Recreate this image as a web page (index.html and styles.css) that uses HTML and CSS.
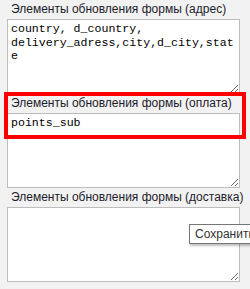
FILE: index.html
```html
<!DOCTYPE html>
<html>
<head>
<meta charset="utf-8">
<link rel="stylesheet" href="styles.css">
</head>
<body>
<div class="form">
  <div class="field">
    <label class="label">Элементы обновления формы (адрес)</label>
    <textarea class="area">country, d_country, delivery_adress,city,d_city,state</textarea>
  </div>
  <div class="field">
    <label class="label">Элементы обновления формы (оплата)</label>
    <textarea class="area">points_sub</textarea>
  </div>
  <div class="field">
    <label class="label">Элементы обновления формы (доставка)</label>
    <textarea class="area"></textarea>
  </div>
</div>
<div class="highlight"></div>
<div class="tooltip">Сохранить</div>
</body>
</html>
```

FILE: styles.css
```css
html, body {
  margin: 0;
  padding: 0;
  background: #f2f2f2;
  width: 250px;
  height: 289px;
  overflow: hidden;
}
body {
  position: relative;
  font-family: "Liberation Sans", Arial, sans-serif;
}
.form {
  padding-left: 7px;
  display: flex;
  flex-direction: column;
}
.field {
  display: flex;
  flex-direction: column;
}
.label {
  display: block;
  height: 19px;
  line-height: 18px;
  font-size: 12px;
  padding-left: 4px;
  color: #1c1c2c;
  white-space: nowrap;
}
.area {
  display: block;
  box-sizing: border-box;
  width: 233px;
  height: 75px;
  margin: 0;
  border: 1px solid #bdbdbd;
  background: #fff;
  padding: 2px 3px;
  font-family: "Liberation Mono", "Courier New", monospace;
  font-size: 11.6px;
  line-height: 13.5px;
  color: #000;
  resize: vertical;
  overflow: hidden;
}
.highlight {
  position: absolute;
  left: 4px;
  top: 92px;
  width: 234px;
  height: 39px;
  border: 4px solid #ff0000;
}
.tooltip {
  position: absolute;
  left: 189px;
  top: 224px;
  height: 18px;
  padding: 0 5px;
  border: 1px solid #767676;
  background: #fff;
  color: #333;
  font-family: "Liberation Sans", Arial, sans-serif;
  font-size: 12px;
  line-height: 18px;
  white-space: nowrap;
  box-shadow: 1px 2px 2px rgba(0,0,0,0.25);
}
```
